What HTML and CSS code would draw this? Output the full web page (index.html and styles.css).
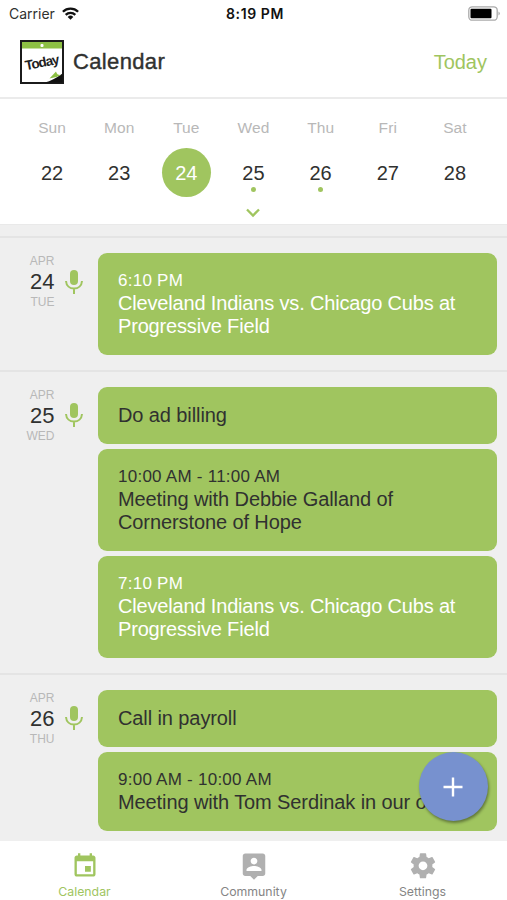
FILE: index.html
```html
<!DOCTYPE html>
<html lang="en">
<head>
<meta charset="utf-8">
<title>Calendar</title>
<link rel="stylesheet" href="styles.css">
</head>
<body>
<svg width="0" height="0" class="defs" aria-hidden="true">
  <symbol id="mic" viewBox="0 0 18 24"><rect x="5" y="0" width="8" height="15" rx="4" fill="#a0c55f"/><path d="M1 11c.3 4.800 3.800 7.500 8 7.500s7.700-2.700 8-7.500M9 18.500V24" fill="none" stroke="#a0c55f" stroke-width="2"/></symbol>
</svg>
<div class="app">
  <div class="status">
    <div class="carrier"><span>Carrier</span>
      <svg width="17" height="13" viewBox="0 0 17 13"><g fill="none" stroke="#111" stroke-width="2.300"><path d="M.9 4.700a10.800 10.800 0 0 1 15.200 0"/><path d="M3.700 7.900a6.800 6.800 0 0 1 9.600 0"/></g><path d="M5.700 9.900a4 4 0 0 1 5.600 0L8.500 12.700z" fill="#111"/></svg>
    </div>
    <span class="clock">8:19 PM</span>
    <svg class="battery" width="33" height="15" viewBox="0 0 33 15"><rect x=".8" y=".8" width="28.400" height="13.400" rx="3.500" fill="#fff" stroke="#aaa" stroke-width="1.300"/><rect x="2.500" y="2.800" width="21" height="9.500" rx="1" fill="#000"/><path d="M30.600 5.500q2 2 0 4z" fill="#888"/></svg>
  </div>
  <header class="header">
    <div class="logo">
      <svg width="44" height="44" viewBox="0 0 44 44"><rect x="1" y="1" width="42" height="42" fill="#fff" stroke="#1b1b1b" stroke-width="2"/><rect x="2" y="2" width="40" height="6.500" fill="#8dc044"/><rect x="20.500" y="4" width="3" height="3" rx="1" fill="#fff"/><path d="M25 42.500q8-2 17.500-9v9z" fill="#111"/><path d="M29.500 38.500l6.500-7q1 4 5 3.500-5 3-11.500 3.500z" fill="#8dc044"/></svg>
      <span class="logo-text">Today</span>
    </div>
    <h1>Calendar</h1>
    <span class="today">Today</span>
  </header>
  <section class="week">
    <div class="day"><span class="name">Sun</span><span class="num">22</span></div>
    <div class="day"><span class="name">Mon</span><span class="num">23</span></div>
    <div class="day"><span class="name">Tue</span><span class="num selected">24</span></div>
    <div class="day"><span class="name">Wed</span><span class="num marked">25</span></div>
    <div class="day"><span class="name">Thu</span><span class="num marked">26</span></div>
    <div class="day"><span class="name">Fri</span><span class="num">27</span></div>
    <div class="day"><span class="name">Sat</span><span class="num">28</span></div>
    <svg class="chevron" width="16" height="10" viewBox="0 0 16 10"><path d="M2 1.500l6 6 6-6" fill="none" stroke="#a0c55f" stroke-width="2.300"/></svg>
  </section>
  <main class="agenda">
    <section class="group">
      <div class="date"><small>APR</small><b>24</b><small>TUE</small></div>
      <svg class="mic" width="18" height="24"><use href="#mic"/></svg>
      <div class="events">
        <article class="card light"><p class="time">6:10 PM</p><p>Cleveland Indians vs. Chicago Cubs at<br>Progressive Field</p></article>
      </div>
    </section>
    <section class="group">
      <div class="date"><small>APR</small><b>25</b><small>WED</small></div>
      <svg class="mic" width="18" height="24"><use href="#mic"/></svg>
      <div class="events">
        <article class="card"><p>Do ad billing</p></article>
        <article class="card"><p class="time">10:00 AM - 11:00 AM</p><p>Meeting with Debbie Galland of<br>Cornerstone of Hope</p></article>
        <article class="card light"><p class="time">7:10 PM</p><p>Cleveland Indians vs. Chicago Cubs at<br>Progressive Field</p></article>
      </div>
    </section>
    <section class="group">
      <div class="date"><small>APR</small><b>26</b><small>THU</small></div>
      <svg class="mic" width="18" height="24"><use href="#mic"/></svg>
      <div class="events">
        <article class="card"><p>Call in payroll</p></article>
        <article class="card"><p class="time">9:00 AM - 10:00 AM</p><p>Meeting with Tom Serdinak in our o</p></article>
      </div>
    </section>
    <div class="fab"><svg width="20" height="20" viewBox="0 0 20 20"><path d="M10 .5v19M.5 10h19" stroke="#fff" stroke-width="2.400"/></svg></div>
  </main>
  <nav class="tabs">
    <div class="tab active">
      <svg width="28" height="28" viewBox="0 0 24 24"><path fill="currentColor" d="M17 12h-5v5h5v-5zM16 1v2H8V1H6v2H5c-1.110 0-1.990.9-1.990 2L3 19c0 1.100.890 2 2 2h14c1.100 0 2-.9 2-2V5c0-1.100-.9-2-2-2h-1V1h-2zm3 18H5V8h14v11z"/></svg>
      <span>Calendar</span>
    </div>
    <div class="tab">
      <svg width="30" height="28" viewBox="0 0 24 22.400"><path fill="#b0b0b0" transform="translate(0 -.8)" d="M19 2H5c-1.110 0-2 .9-2 2v14c0 1.100.890 2 2 2h4l3 3 3-3h4c1.100 0 2-.9 2-2V4c0-1.100-.9-2-2-2zm-7 3.300c1.490 0 2.700 1.210 2.700 2.700s-1.210 2.700-2.700 2.700S9.300 9.490 9.300 8s1.210-2.700 2.700-2.700zM18 16H6v-.9c0-2 4-3.100 6-3.100s6 1.100 6 3.100v.9z"/></svg>
      <span>Community</span>
    </div>
    <div class="tab">
      <svg width="30" height="28" viewBox="0 0 24 22.400"><path fill="#b0b0b0" transform="translate(0 -1)" d="M19.430 12.980c.040-.32.070-.64.070-.98s-.03-.66-.07-.98l2.110-1.650c.19-.15.240-.42.120-.64l-2-3.460c-.12-.22-.39-.3-.61-.22l-2.490 1c-.52-.4-1.080-.73-1.690-.98l-.38-2.650C14.460 2.180 14.250 2 14 2h-4c-.25 0-.46.180-.49.420l-.38 2.650c-.61.250-1.170.590-1.690.980l-2.490-1c-.23-.09-.49 0-.61.220l-2 3.460c-.13.220-.07.490.120.640l2.110 1.650c-.04.320-.07.650-.07.980s.03.660.07.980l-2.110 1.650c-.19.150-.24.420-.12.640l2 3.460c.12.220.39.300.61.220l2.490-1c.52.400 1.080.730 1.690.980l.38 2.650c.03.240.24.420.49.420h4c.25 0 .46-.18.490-.42l.38-2.650c.61-.25 1.170-.59 1.690-.98l2.490 1c.23.090.49 0 .61-.22l2-3.460c.12-.22.070-.49-.12-.64l-2.110-1.650zM12 15.500c-1.930 0-3.500-1.570-3.500-3.500s1.570-3.500 3.500-3.500 3.500 1.570 3.500 3.500-1.570 3.500-3.500 3.500z"/></svg>
      <span>Settings</span>
    </div>
  </nav>
</div>
</body>
</html>
```
FILE: styles.css
```css
* { box-sizing: border-box; }
body { margin: 0; background: #fff; color: #303130; font-family: "Liberation Sans", Arial, sans-serif; }
h1, p { margin: 0; font-weight: 400; }
svg { display: block; flex: none; }
.defs { position: absolute; }
.app { width: 507px; height: 900px; display: flex; flex-direction: column; overflow: hidden; }

.status { height: 28px; flex: none; display: grid; grid-template-columns: 1fr auto 1fr; align-items: center; padding: 0 6px 1px 9px; font-family: Inter, sans-serif; font-size: 14px; }
.carrier { display: flex; align-items: center; gap: 7px; }
.clock { font-weight: 600; font-size: 14px; letter-spacing: .6px; color: #111; }
.battery { justify-self: end; }

.header { height: 71px; flex: none; display: flex; align-items: center; padding: 0 20px 1px; border-bottom: 2px solid #ebebeb; }
.logo { position: relative; width: 44px; height: 44px; }
.logo-text { position: absolute; left: 5px; top: 14px; font: bold 13.500px/18px "Liberation Sans", sans-serif; letter-spacing: -1px; color: #222; transform: rotate(-11deg); }
h1 { margin-left: 9px; font-size: 22px; letter-spacing: .35px; -webkit-text-stroke: .4px #303130; }
.today { margin-left: auto; font-size: 20px; color: #a0c55f; }

.week { height: 125px; flex: none; display: grid; grid-template-columns: repeat(7, 67.150px); grid-template-rows: 99px 26px; justify-content: center; }
.day { display: flex; flex-direction: column; align-items: center; padding-top: 19px; }
.name { height: 20px; line-height: 20px; font-size: 15.500px; letter-spacing: .1px; color: #b8b8b8; }
.num { position: relative; margin-top: 10px; width: 50px; height: 49px; line-height: 50px; text-align: center; font-size: 20px; }
.selected { width: 49px; border-radius: 50%; background: #a0c55f; color: #fff; }
.marked::after { content: ""; position: absolute; left: 22.500px; top: 39px; width: 5px; height: 5px; border-radius: 50%; background: #a0c55f; }
.chevron { grid-column: 4; justify-self: center; margin-top: 10px; }

.agenda { position: relative; flex: 1; min-height: 0; overflow: hidden; padding-top: 11px; background: #efefef; border-top: 1px solid #e9e9e9; }
.group { display: flex; align-items: flex-start; padding: 15px 10px 15px 0; border-top: 2px solid #e4e4e4; }
.date { width: 54.500px; display: flex; flex-direction: column; align-items: flex-end; padding-top: 1px; }
.date small { font-size: 12px; line-height: 14px; color: #b8b8b8; }
.date b { font-weight: 400; font-size: 22px; line-height: 27px; }
.mic { margin: 16.500px 15px 0 10.500px; }
.events { flex: 1; display: flex; flex-direction: column; gap: 5px; }
.card { padding: 16px 20px; border-radius: 9px; background: #a0c55f; font-size: 20px; line-height: 23px; letter-spacing: -.1px; white-space: nowrap; }
.card:has(.time) { height: 101.700px; }
.group:last-of-type .card:last-child { height: 79px; }
.card p:only-child { padding: 1.500px 0 1px; }
.card .time { font-size: 17px; letter-spacing: .25px; }
.light { color: #fff; letter-spacing: -.17px; }
.fab { position: absolute; left: 419px; top: 527px; width: 69px; height: 69px; padding-right: 1px; border-radius: 50%; background: #7791cf; box-shadow: 1px 2px 3px rgba(0, 0, 0, .4); display: flex; align-items: center; justify-content: center; }

.tabs { height: 59px; flex: none; display: grid; grid-template-columns: repeat(3, 1fr); }
.tab { display: flex; flex-direction: column; align-items: center; padding-top: 11px; color: #858585; font-family: Inter, sans-serif; font-size: 12.300px; line-height: 15px; }
.tab span { margin-top: 4px; }
.tab.active { color: #a0c55f; }
```
